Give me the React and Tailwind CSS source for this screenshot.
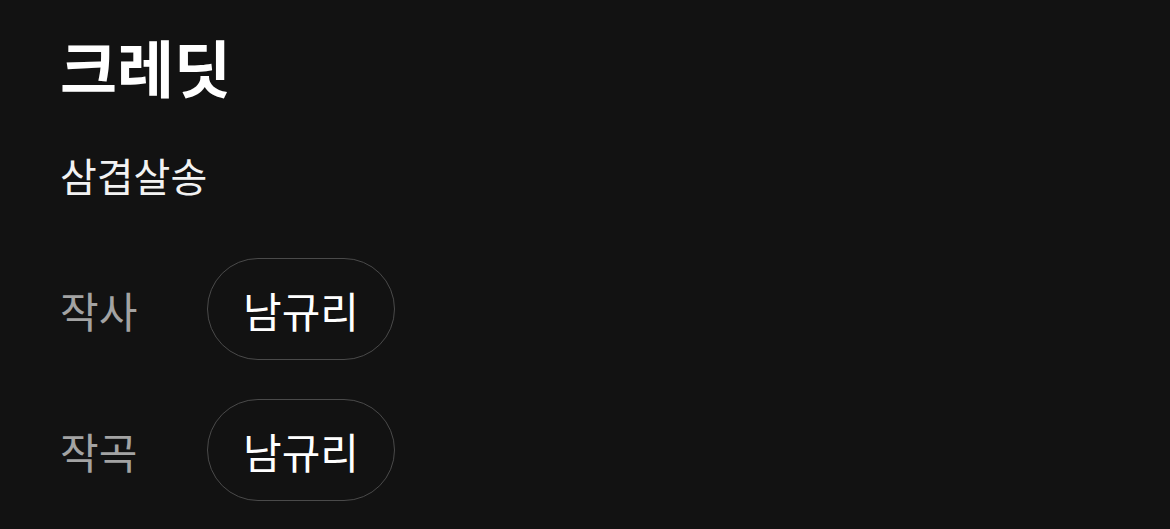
export default function App() {
  const credits = [
    { role: "작사", name: "남규리" },
    { role: "작곡", name: "남규리" },
  ];
  return (
    <div
      className="min-h-[529px] w-full bg-[#121212] px-[60px] pt-[22px]"
      style={{ fontFamily: '"Noto Sans CJK KR", "Noto Sans", sans-serif' }}
    >
      <h1 className="text-[62px] font-bold leading-[88px] text-white">크레딧</h1>
      <p className="mt-[41px] text-[40px] leading-[48px] text-[#f2f2f2]">삼겹살송</p>
      <div className="mt-[59px] flex flex-col gap-[39px]">
        {credits.map((c, i) => (
          <div key={i} className="flex items-center">
            <span className="w-[147px] text-[42px] text-[#a3a3a3]">{c.role}</span>
            <span className="flex h-[102px] w-[188px] items-center justify-center rounded-full border border-[#4a4a4a] text-[42px] text-white">
              {c.name}
            </span>
          </div>
        ))}
      </div>
    </div>
  );
}
